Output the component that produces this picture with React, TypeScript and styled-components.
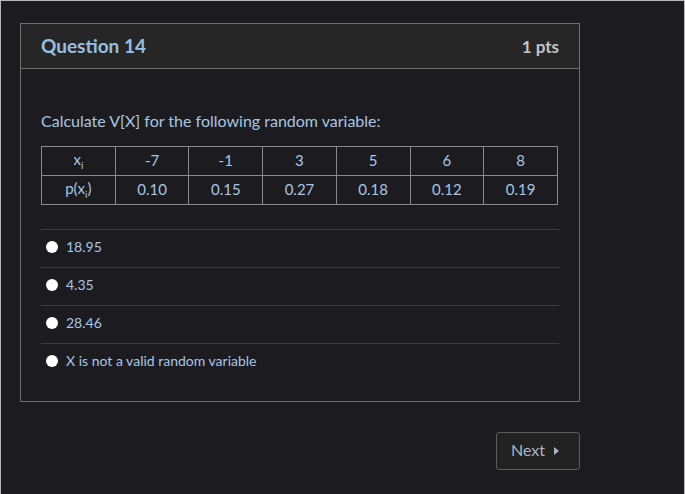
import React from 'react'
import styled, { createGlobalStyle } from 'styled-components'

const GlobalStyle = createGlobalStyle`
  html, body {
    margin: 0;
    padding: 0;
    background: #1c1c20;
  }
  body {
    font-family: Lato, "Open Sans", sans-serif;
  }
`

const Page = styled.div`
  box-sizing: border-box;
  width: 685px;
  height: 494px;
  background: #1c1c20;
  border: 1px solid #b8b8b8;
  border-bottom: none;
  padding: 22px 0 0 19px;
`

const Card = styled.div`
  box-sizing: border-box;
  width: 560px;
  height: 379px;
  border: 1px solid #6e6e6e;
  background: #1c1c20;
`

const Header = styled.div`
  display: flex;
  align-items: center;
  justify-content: space-between;
  height: 44px;
  padding: 0 20px;
  background: #262626;
  border-bottom: 1px solid #6e6e6e;
`

const Title = styled.div`
  color: #98c0e0;
  font-size: 19px;
  font-weight: 700;
  margin-top: -2px;
`

const Points = styled.div`
  color: #c4c4c4;
  font-size: 17px;
  font-weight: 700;
`

const Body = styled.div`
  padding: 42px 20px 0 20px;
`

const Prompt = styled.div`
  color: #a8c6e2;
  font-size: 16px;
  line-height: 19px;
  margin-bottom: 16px;
`

const Table = styled.table`
  width: 517px;
  border-collapse: collapse;
  table-layout: fixed;
`

const Cell = styled.td`
  border: 1px solid #8a8a8a;
  height: 26px;
  padding: 0 0 2px 0;
  text-align: center;
  color: #a8c6e2;
  font-size: 15px;
`

const Sub = styled.sub`
  font-size: 10px;
`

const Answers = styled.div`
  margin-top: 24px;
`

const Answer = styled.label`
  display: flex;
  align-items: center;
  box-sizing: border-box;
  height: 38px;
  padding: 0 0 5px 5px;
  border-top: 1px solid #3c3c3e;
  color: #a8c6e2;
  font-size: 14px;
`

const Radio = styled.span`
  width: 12px;
  height: 12px;
  border-radius: 50%;
  background: #ffffff;
  margin-right: 8px;
  margin-top: 2px;
`

const Footer = styled.div`
  display: flex;
  justify-content: flex-end;
  width: 560px;
  margin-top: 30px;
`

const NextButton = styled.button`
  box-sizing: border-box;
  display: flex;
  align-items: center;
  gap: 9px;
  width: 84px;
  height: 38px;
  padding: 0 0 3px 14px;
  background: #222222;
  border: 1px solid #5c5c5c;
  border-radius: 3px;
  color: #a9b6c4;
  font-family: Lato, sans-serif;
  font-size: 16px;
`

const Arrow = styled.span`
  width: 0;
  height: 0;
  border-top: 4px solid transparent;
  border-bottom: 4px solid transparent;
  border-left: 5px solid #a9b6c4;
  margin-top: 2px;
`

const xs = ['-7', '-1', '3', '5', '6', '8']
const ps = ['0.10', '0.15', '0.27', '0.18', '0.12', '0.19']
const options = ['18.95', '4.35', '28.46', 'X is not a valid random variable']

const App: React.FunctionComponent = () => {
  return (
    <Page>
      <GlobalStyle />
      <Card>
        <Header>
          <Title>Question 14</Title>
          <Points>1 pts</Points>
        </Header>
        <Body>
          <Prompt>Calculate V[X] for the following random variable:</Prompt>
          <Table>
            <tbody>
              <tr>
                <Cell>x<Sub>i</Sub></Cell>
                {xs.map((x) => <Cell key={x}>{x}</Cell>)}
              </tr>
              <tr>
                <Cell>p(x<Sub>i</Sub>)</Cell>
                {ps.map((p) => <Cell key={p}>{p}</Cell>)}
              </tr>
            </tbody>
          </Table>
          <Answers>
            {options.map((o) => (
              <Answer key={o}>
                <Radio />
                {o}
              </Answer>
            ))}
          </Answers>
        </Body>
      </Card>
      <Footer>
        <NextButton>
          Next
          <Arrow />
        </NextButton>
      </Footer>
    </Page>
  )
}

export default App
